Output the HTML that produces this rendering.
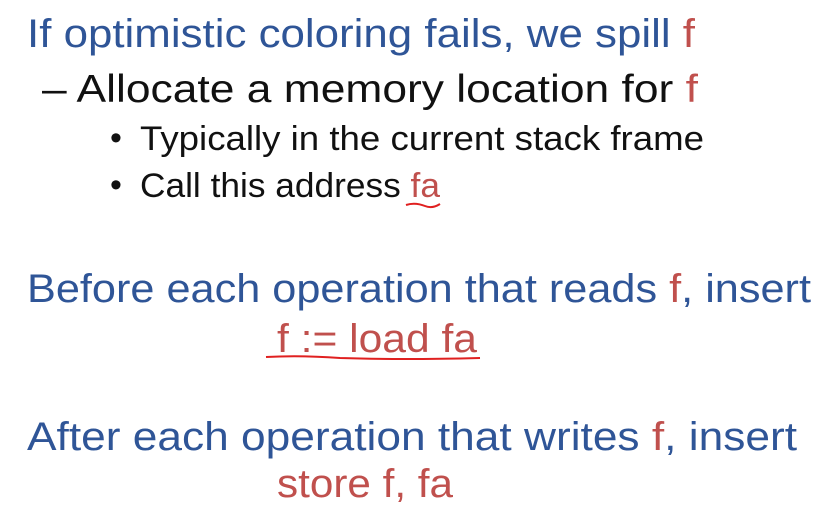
<!DOCTYPE html>
<html><head><style>html,body{margin:0;padding:0;background:#fff;width:832px;height:510px;overflow:hidden}</style></head>
<body>
<svg width="832" height="510" viewBox="0 0 832 510" xmlns="http://www.w3.org/2000/svg" font-family="Liberation Sans, Arial, sans-serif">
<rect width="832" height="510" fill="#fff"/>
<text x="27" y="47" font-size="40" fill="#2f5597" textLength="668" lengthAdjust="spacingAndGlyphs">If optimistic coloring fails, we spill <tspan fill="#c0504d">f</tspan></text>
<text x="42" y="102" font-size="39" fill="#111" textLength="656" lengthAdjust="spacingAndGlyphs">– Allocate a memory location for <tspan fill="#c0504d">f</tspan></text>
<text x="110" y="149" font-size="34" fill="#111">•</text>
<text x="140" y="150" font-size="34" fill="#111" textLength="564" lengthAdjust="spacingAndGlyphs">Typically in the current stack frame</text>
<text x="110" y="196" font-size="34" fill="#111">•</text>
<text x="140" y="197" font-size="34" fill="#111" textLength="300" lengthAdjust="spacingAndGlyphs">Call this address <tspan fill="#c0504d">fa</tspan></text>
<path d="M406 205 Q415 202 425 206 Q432 209 440 204" stroke="#e02020" stroke-width="2" fill="none"/>
<text x="27" y="302" font-size="40" fill="#2f5597" textLength="784" lengthAdjust="spacingAndGlyphs">Before each operation that reads <tspan fill="#c0504d">f</tspan>, insert</text>
<text x="277" y="352" font-size="40" fill="#c0504d" textLength="200" lengthAdjust="spacingAndGlyphs">f := load fa</text>
<path d="M266 357 Q300 355 340 358 Q400 360 480 358" stroke="#e02020" stroke-width="2" fill="none"/>
<text x="27" y="450" font-size="40" fill="#2f5597" textLength="770" lengthAdjust="spacingAndGlyphs">After each operation that writes <tspan fill="#c0504d">f</tspan>, insert</text>
<text x="277" y="497" font-size="40" fill="#c0504d" textLength="176" lengthAdjust="spacingAndGlyphs">store f, fa</text>
</svg>
</body></html>
